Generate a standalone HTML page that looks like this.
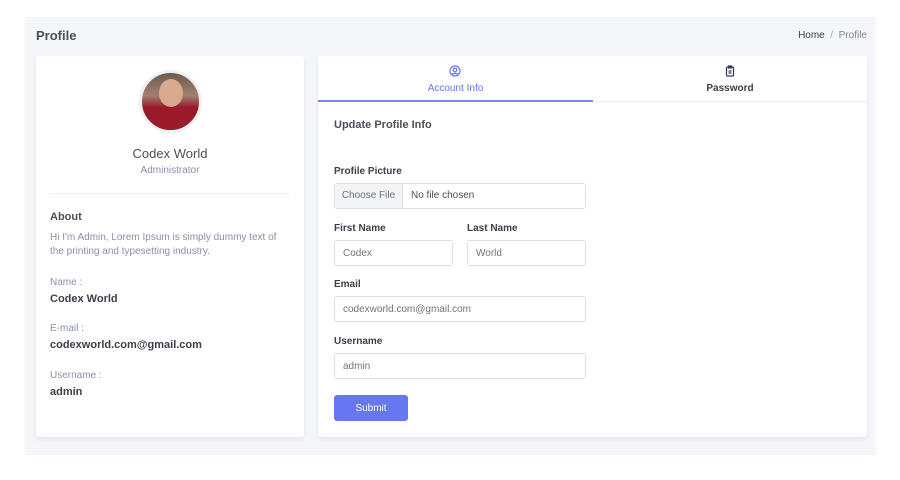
<!DOCTYPE html>
<html><head><style>
*{box-sizing:border-box;margin:0;padding:0}
body{width:900px;height:480px;background:#fff;font-family:"Liberation Sans",sans-serif;position:relative;overflow:hidden;color:#3b3f4a}
.bg{position:absolute;left:25px;top:17px;width:851px;height:438px;background:#f4f6f9}
.abs{position:absolute}
.card{position:absolute;background:#fff;border-radius:3px;box-shadow:0 2px 4px rgba(0,0,0,.08)}
.lbl{font-size:10px;font-weight:bold;color:#3b3f4a}
.inp{position:absolute;border:1px solid #dde1e6;border-radius:3px;height:26px;font-size:10px;color:#6c757d;padding-left:8px;line-height:26px;background:#fff}
.sm{font-size:10px;color:#8a8fa8}
</style></head><body>
<div class="bg"></div>
<div class="abs" style="left:36px;top:28px;font-size:13px;font-weight:bold;color:#4b4f58">Profile</div>
<div class="abs" style="right:33px;top:30px;font-size:10px;color:#3b3f4a">Home <span style="color:#aaa">&nbsp;/&nbsp;</span> <span style="color:#888">Profile</span></div>

<div class="card" style="left:36px;top:56px;width:268px;height:381px">
 <div class="abs" style="left:103px;top:14px;width:63px;height:63px;border-radius:50%;border:3px solid #f0f0f0;overflow:hidden;background:linear-gradient(#6b5a4f 0%,#a28070 40%,#9a1b2a 60%,#8d1828 100%)">
  <div class="abs" style="left:17px;top:6px;width:24px;height:28px;border-radius:50%;background:#d9a990"></div>
  <div class="abs" style="left:6px;top:36px;width:48px;height:30px;border-radius:40% 40% 0 0;background:#9b1a2b"></div>
 </div>
 <div class="abs" style="left:0;width:268px;top:90px;text-align:center;font-size:13px;color:#4b4f58">Codex World</div>
 <div class="abs" style="left:0;width:268px;top:109px;text-align:center;font-size:10px;color:#8a8fa8">Administrator</div>
 <div class="abs" style="left:14px;top:137px;width:240px;border-top:1px solid #eee"></div>
 <div class="abs" style="left:14px;top:155px;font-size:11px;font-weight:bold;color:#4b4f58">About</div>
 <div class="abs sm" style="left:14px;top:175px;line-height:14px;width:240px">Hi I'm Admin, Lorem Ipsum is simply dummy text of the printing and typesetting industry.</div>
 <div class="abs sm" style="left:14px;top:221px">Name :</div>
 <div class="abs" style="left:14px;top:237px;font-size:11px;font-weight:bold">Codex World</div>
 <div class="abs sm" style="left:14px;top:267px">E-mail :</div>
 <div class="abs" style="left:14px;top:283px;font-size:11px;font-weight:bold">codexworld.com@gmail.com</div>
 <div class="abs sm" style="left:14px;top:314px">Username :</div>
 <div class="abs" style="left:14px;top:330px;font-size:11px;font-weight:bold">admin</div>
</div>

<div class="card" style="left:318px;top:56px;width:549px;height:381px">
 <div class="abs" style="left:0;top:45px;width:549px;border-top:1px solid #eee"></div>
 <div class="abs" style="left:0;top:44px;width:275px;border-top:2px solid #7c84ee"></div>
 <svg class="abs" style="left:131px;top:9px" width="12" height="12" viewBox="0 0 12 12" fill="none" stroke="#6777ef" stroke-width="1.2"><circle cx="6" cy="6" r="5"/><circle cx="6" cy="5" r="1.8"/><path d="M3 9.5c1-1.5 5-1.5 6 0"/></svg>
 <div class="abs" style="left:0;width:275px;top:27px;text-align:center;font-size:10px;color:#6777ef">Account Info</div>
 <svg class="abs" style="left:406px;top:9px" width="12" height="12" viewBox="0 0 12 12" fill="none" stroke="#34395e" stroke-width="1.2"><rect x="2.5" y="2" width="7" height="9" rx="1"/><rect x="4.5" y="1" width="3" height="2"/><path d="M4.5 6h3M4.5 8h3"/></svg>
 <div class="abs" style="left:275px;width:274px;top:27px;text-align:center;font-size:10px;font-weight:bold;color:#3b3f4a">Password</div>
 <div class="abs" style="left:16px;top:63px;font-size:11px;font-weight:bold;color:#4b4f58">Update Profile Info</div>
 <div class="abs lbl" style="left:16px;top:110px">Profile Picture</div>
 <div class="inp" style="left:16px;top:127px;width:252px;padding-left:0;line-height:24px">
  <span style="display:inline-block;width:68px;height:24px;background:#f3f4f6;border-right:1px solid #dde1e6;text-align:center;color:#6c757d">Choose File</span><span style="padding-left:8px;color:#495057">No file chosen</span></div>
 <div class="abs lbl" style="left:16px;top:167px">First Name</div>
 <div class="abs lbl" style="left:149px;top:167px">Last Name</div>
 <div class="inp" style="left:16px;top:184px;width:119px">Codex</div>
 <div class="inp" style="left:149px;top:184px;width:119px">World</div>
 <div class="abs lbl" style="left:16px;top:223px">Email</div>
 <div class="inp" style="left:16px;top:240px;width:252px">codexworld.com@gmail.com</div>
 <div class="abs lbl" style="left:16px;top:280px">Username</div>
 <div class="inp" style="left:16px;top:297px;width:252px">admin</div>
 <div class="abs" style="left:16px;top:339px;width:74px;height:26px;background:#6777ef;border-radius:3px;color:#fff;font-size:10px;text-align:center;line-height:28px">Submit</div>
</div>
</body></html>
